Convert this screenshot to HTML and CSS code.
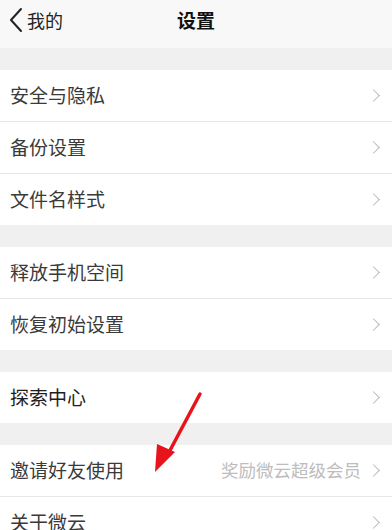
FILE: index.html
```html
<!doctype html>
<html>
	<head>
		<meta charset="utf-8"/>
		<meta name="viewport" content="width=device-width, initial-scale=1" />
		<link rel="stylesheet" href="styles.css">
	</head>
	<body>
		<div class="topbar">
			<div class="back">
				<svg width="16" height="26" viewBox="0 0 16 26"><path d="M13 2 L3 13 L13 24" fill="none" stroke="#222" stroke-width="2" stroke-linecap="round" stroke-linejoin="round"/></svg>
				<span>我的</span>
			</div>
			<div class="title">设置</div>
		</div>

		<div class="group">
			<div class="row"><span class="label">安全与隐私</span><span class="arrow"></span></div>
			<div class="row"><span class="label">备份设置</span><span class="arrow"></span></div>
			<div class="row"><span class="label">文件名样式</span><span class="arrow"></span></div>
		</div>

		<div class="group">
			<div class="row"><span class="label">释放手机空间</span><span class="arrow"></span></div>
			<div class="row"><span class="label">恢复初始设置</span><span class="arrow"></span></div>
		</div>

		<div class="group">
			<div class="row"><span class="label dark">探索中心</span><span class="arrow"></span></div>
		</div>

		<div class="group">
			<div class="row"><span class="label">邀请好友使用</span><span class="hint">奖励微云超级会员</span><span class="arrow"></span></div>
			<div class="row"><span class="label">关于微云</span><span class="arrow"></span></div>
		</div>

		<!-- red annotation arrow over the list -->
		<svg class="pointer" width="60" height="90" viewBox="0 0 60 90">
			<line x1="52" y1="4" x2="19" y2="66" stroke="#e8141c" stroke-width="3.5" stroke-linecap="round"/>
			<polygon points="7,82 9,54 27,62" fill="#e8141c"/>
		</svg>
	</body>
</html>
```

FILE: styles.css
```css
body {
	margin: 0;
	background-color: #f0f0f0;
	font-family: "Noto Sans CJK SC", "Noto Sans", sans-serif;
	color: #333;
	width: 392px;
	height: 530px;
	overflow: hidden;
	position: relative;
}

.topbar {
	height: 48px;
	background-color: #f8f8f8;
	display: flex;
	align-items: flex-start;
	padding-top: 7px;
	box-sizing: border-box;
	position: relative;
}

.back {
	display: flex;
	align-items: center;
	gap: 3px;
	padding-left: 8px;
	height: 26px;
	font-size: 18px;
	color: #222;
}

.title {
	position: absolute;
	left: 0;
	right: 0;
	top: 8px;
	text-align: center;
	font-size: 19px;
	font-weight: bold;
	line-height: 24px;
	color: #111;
}

.group {
	margin-top: 22px;
	background-color: #fff;
}

.row {
	height: 51px;
	display: flex;
	align-items: center;
	padding: 0 11px 0 10px;
	border-bottom: 1px solid #e6e6e6;
}

.row:last-child {
	border-bottom: none;
}

.label {
	flex: 1;
	font-size: 19px;
	line-height: 24px;
	margin-top: -2px;
	color: #3a3a3a;
}

.label.dark {
	color: #1e1e1e;
}

.hint {
	font-size: 17.5px;
	line-height: 24px;
	margin-top: -2px;
	color: #bdbdbd;
	margin-right: 8px;
}

.arrow {
	width: 8px;
	height: 8px;
	border-top: 1.5px solid #bbb;
	border-right: 1.5px solid #bbb;
	transform: rotate(45deg);
	margin-right: 3px;
}

.pointer {
	position: absolute;
	left: 148px;
	top: 390px;
}
```
